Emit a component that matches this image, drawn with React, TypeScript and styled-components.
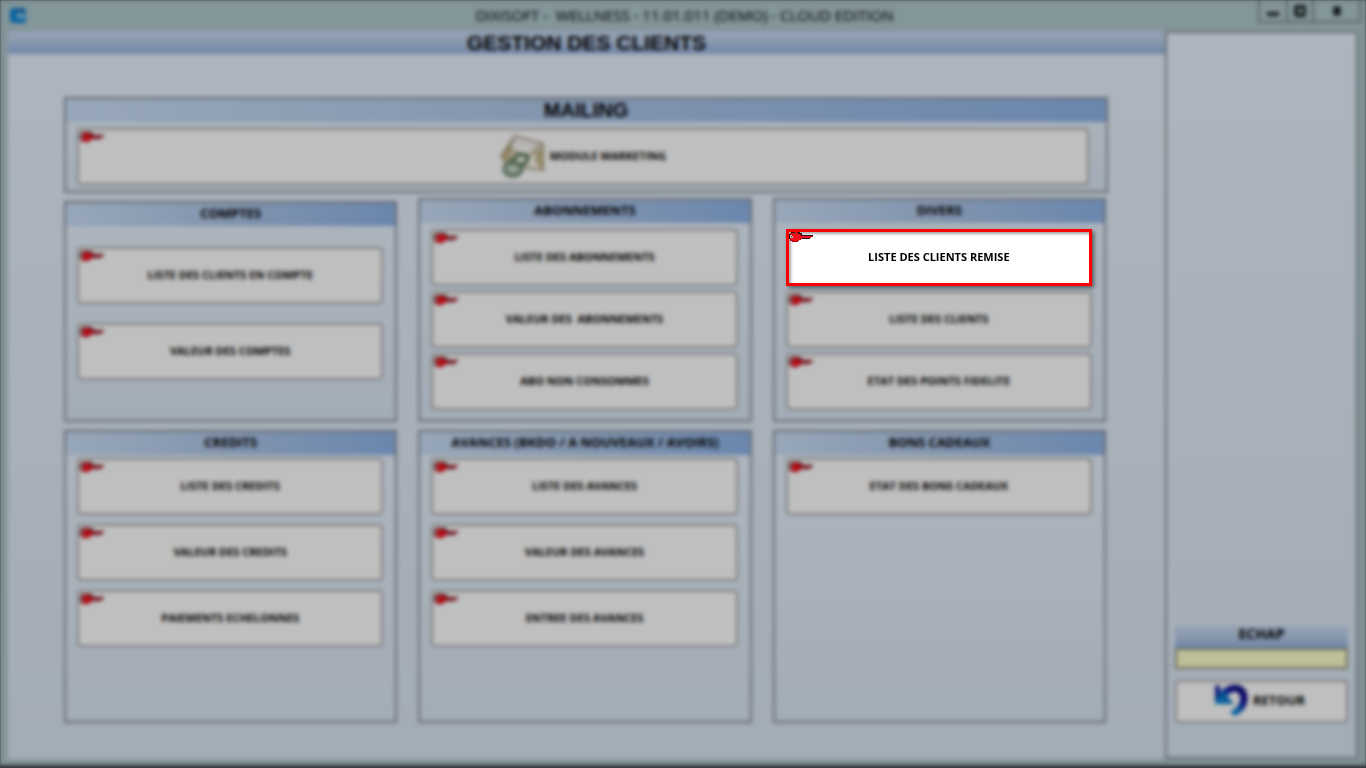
import React from "react";
import styled, { createGlobalStyle, css } from "styled-components";

const GlobalStyle = createGlobalStyle`
  * { box-sizing: border-box; }
  html, body { margin: 0; padding: 0; }
  body { font-family: "Open Sans", "Noto Sans", sans-serif; color: #000; }
  button, input { font: inherit; color: inherit; }
  h1, h2, p { margin: 0; }
`;

const edge = "#858d96";
const panelGradient = "linear-gradient(90deg, #cbe0f8 0%, #adc6e8 50%, #8fb4e8 100%)";
const barGradient = "linear-gradient(180deg, #c6d9f0 0%, #bccfea 40%, #94b2e0 100%)";

const Window = styled.div`
  position: relative;
  display: flex;
  flex-direction: column;
  min-height: 100vh;
  padding: 0 7px 6px;
  border: 1px solid #66757a;
  border-bottom: 3px solid #3c4648;
  background: #afc8cd;
`;

const TitleBar = styled.header`
  display: grid;
  grid-template-columns: 104px 1fr 104px;
  height: 30px;
  margin-right: -3px;
`;

const AppIcon = styled.svg`
  display: block;
  margin: 6px 0 0 1px;
`;

const WindowTitle = styled.p`
  padding-top: 4px;
  font-size: 15px;
  line-height: 20px;
  text-align: center;
  white-space: pre;
`;

const WindowButtons = styled.div`
  display: flex;
  justify-self: end;
  height: 22px;
  border: 2px solid #77898d;
  border-top: 0;
`;

const WindowButton = styled.button<{ $wide?: boolean }>`
  display: flex;
  align-items: center;
  justify-content: center;
  width: ${(p) => (p.$wide ? 47 : 26)}px;
  padding: 0;
  border: 0;
  background: transparent;

  & + & { border-left: 2px solid #77898d; }
`;

const Body = styled.div`
  display: flex;
  flex: 1;
`;

const Main = styled.main`
  display: flex;
  flex: 1;
  flex-direction: column;
  background: linear-gradient(180deg, #e8f1fd 0%, #dae7f4 100%);
`;

const PageTitle = styled.h1`
  height: 23px;
  background: ${barGradient};
  font: bold 21px/23px "Liberation Sans", Arial, sans-serif;
  text-align: center;
`;

const Content = styled.div`
  display: flex;
  flex: 1;
  flex-direction: column;
  gap: 5px;
  padding: 43px 57px 36px 56px;
`;

const Panels = styled.div`
  display: grid;
  flex: 1;
  grid-template-columns: repeat(3, 1fr);
  grid-template-rows: 224px 1fr;
  gap: 8px 21px;
  padding-right: 2px;
`;

const PanelBox = styled.section<{ $lowered?: boolean }>`
  display: flex;
  flex-direction: column;
  margin-top: ${(p) => (p.$lowered ? 3 : 0)}px;
  border: 2px solid ${edge};
  background: linear-gradient(180deg, #e8f1fd 0%, #dae7f4 100%);
`;

const PanelTitle = styled.h2<{ $large?: boolean }>`
  height: 23px;
  background: ${panelGradient};
  text-align: center;
  font-weight: bold;
  font-size: 13px;
  line-height: 21px;
  ${(p) =>
    p.$large &&
    css`
      font: bold 20px/23px "Liberation Sans", Arial, sans-serif;
    `}
`;

const Actions = styled.div<{ $top: number; $gap: number; $wide?: boolean }>`
  display: flex;
  flex-direction: column;
  gap: ${(p) => p.$gap}px;
  padding: ${(p) => p.$top}px ${(p) => (p.$wide ? 17 : 12)}px 6px 11px;
`;

const Button = styled.button<{ $active?: boolean }>`
  position: relative;
  display: flex;
  align-items: center;
  justify-content: center;
  gap: 4px;
  height: 57px;
  padding: 0 0 2px;
  border: 2px solid #a8a8a8;
  border-radius: 4px;
  background: #fff;
  font-size: 11px;
  font-weight: bold;
  white-space: pre;
  ${(p) =>
    p.$active &&
    css`
      z-index: 2;
      border: 3px solid #ff0000;
      border-radius: 0;
      box-shadow: 2px 2px 4px rgba(0, 0, 0, 0.5), inset 2px 2px 3px rgba(0, 0, 0, 0.35);
    `}
`;

const KeyIcon = styled.svg<{ $active?: boolean }>`
  position: absolute;
  top: ${(p) => (p.$active ? 0 : 2)}px;
  left: ${(p) => (p.$active ? 0 : 1)}px;
`;

const Sidebar = styled.aside`
  display: flex;
  flex-direction: column;
  justify-content: flex-end;
  width: 193px;
  padding: 0 8px 34px;
  border: 2px solid ${edge};
  background: linear-gradient(180deg, #e8f1fd 0%, #dae7f4 100%);
`;

const FieldLabel = styled.label`
  height: 22px;
  background: ${barGradient};
  font-size: 14px;
  font-weight: bold;
  line-height: 16px;
  text-align: center;
`;

const Field = styled.input`
  width: 100%;
  height: 21px;
  margin-bottom: 11px;
  border: 2px solid #8c8c78;
  background: #ffffcc;
`;

const BackButton = styled(Button)`
  height: 43px;
  gap: 5px;
  padding: 0 4px 4px 0;
  font-size: 13px;
`;

const Dimmer = styled.div`
  position: absolute;
  inset: -1px -1px -3px;
  z-index: 1;
  background: rgba(0, 0, 0, 0.25);
  backdrop-filter: blur(2px);
  pointer-events: none;
`;

const Key = ({ active }: { active?: boolean }) => (
  <KeyIcon $active={active} width="24" height="12" viewBox="0 0 24 12" aria-hidden="true" shapeRendering="crispEdges">
    <path d="M2 0h7v1h2v1h2v1h10v1h1v1h-2v1h-1V6h-1v1h-2V6h-1v1h-5v1h-2v1H9v1H3V9H1V7H0V2h1V1h1z" fill="#b00810" />
    <path d="M9 0h2v1h2v2h11v1H12V2H9zM12 6h9v1h-8zM0 2h1v5H0zM2 0h3v1H2z" fill="#281014" />
    <path d="M3 1h5v1h3v2h2v1h9v1H12v1h-1v1H9v1H4V8H2V6h2V3H2V2h1z" fill="#f80c18" />
    <path d="M1 3h2v1h1v2H1z" fill="#b8b8b8" />
    <path d="M2 4h1v1H2zM5 1h2v1H5z" fill="#505050" />
    <path d="M13 4h9v1h-9z" fill="#f01020" />
    <path d="M8 4h1v1H8zM14 5h1v1h-1zM18 5h1v1h-1z" fill="#d020a0" />
  </KeyIcon>
);

const Mail = () => (
  <svg width="46" height="48" viewBox="0 0 46 48" aria-hidden="true">
    <path d="M15 4 43 12v26L8 33 1 24z" fill="#e8dfbd" stroke="#a3967a" strokeWidth="2" />
    <path d="m15 4-6 14 17 5 17-11z" fill="#f4f1ed" stroke="#b5a9a0" strokeWidth="2" />
    <path d="m13 18 14-2 13 9v12l-20-5z" fill="#fffef5" />
    <path d="M1 24 11 13l-2 17M43 38l-8-10 8-12" fill="#c9bb8a" stroke="#a09270" />
    <path d="m14 19 11 5 15-4" fill="none" stroke="#a99b78" strokeWidth="2" />
    <ellipse cx="20" cy="28" rx="8" ry="5" fill="none" stroke="#5d7d5e" strokeWidth="4" transform="rotate(-20 20 28)" />
    <ellipse cx="13" cy="37" rx="9" ry="7" fill="#dfe9df" stroke="#5d8062" strokeWidth="3" />
    <path d="M17 34c-8-4-12 6-5 7 5 0 7-3 6-8" fill="none" stroke="#86a48b" strokeWidth="2" />
  </svg>
);

const BackArrow = () => (
  <svg width="34" height="32" viewBox="0 0 34 32" aria-hidden="true">
    <defs>
      <linearGradient id="back" x1="0" y1="1" x2="1" y2="0">
        <stop offset="0" stopColor="#08aee8" />
        <stop offset="0.45" stopColor="#0879cc" />
        <stop offset="0.65" stopColor="#10109a" />
        <stop offset="1" stopColor="#08086c" />
      </linearGradient>
    </defs>
    <path
      d="M1 2 6 1v7C14-1 28-2 32 7c5 11-2 22-12 25l-4-4c8-4 13-12 9-18-3-4-8-2-12 2l7 8H1z"
      fill="url(#back)"
    />
    <path d="M1 2 6 1v8l-4 9z" fill="#182098" />
  </svg>
);

type Action = { label: string; active?: boolean };
type PanelData = { title: string; top: number; gap: number; lowered?: boolean; actions: Action[] };

const panels: PanelData[] = [
  {
    title: "COMPTES",
    top: 21,
    gap: 19,
    lowered: true,
    actions: [{ label: "LISTE DES CLIENTS EN COMPTE" }, { label: "VALEUR DES COMPTES" }],
  },
  {
    title: "ABONNEMENTS",
    top: 6,
    gap: 5,
    actions: [{ label: "LISTE DES ABONNEMENTS" }, { label: "VALEUR DES  ABONNEMENTS" }, { label: "ABO NON CONSOMMES" }],
  },
  {
    title: "DIVERS",
    top: 6,
    gap: 5,
    actions: [
      { label: "LISTE DES CLIENTS REMISE", active: true },
      { label: "LISTE DES CLIENTS" },
      { label: "ETAT DES POINTS FIDELITE" },
    ],
  },
  {
    title: "CREDITS",
    top: 3,
    gap: 9,
    actions: [{ label: "LISTE DES CREDITS" }, { label: "VALEUR DES CREDITS" }, { label: "PAIEMENTS ECHELONNES" }],
  },
  {
    title: "AVANCES (BKDO / A NOUVEAUX / AVOIRS)",
    top: 3,
    gap: 9,
    actions: [{ label: "LISTE DES AVANCES" }, { label: "VALEUR DES AVANCES" }, { label: "ENTREE DES AVANCES" }],
  },
  { title: "BONS CADEAUX", top: 3, gap: 9, actions: [{ label: "ETAT DES BONS CADEAUX" }] },
];

const Panel = ({ title, top, gap, lowered, actions }: PanelData) => (
  <PanelBox $lowered={lowered}>
    <PanelTitle>{title}</PanelTitle>
    <Actions $top={top} $gap={gap}>
      {actions.map(({ label, active }) => (
        <Button key={label} type="button" $active={active}>
          <Key active={active} />
          {label}
        </Button>
      ))}
    </Actions>
  </PanelBox>
);

export default function App() {
  return (
    <>
      <GlobalStyle />
      <Window>
        <TitleBar>
          <AppIcon width="18" height="17" viewBox="0 0 18 17" aria-hidden="true">
            <rect x="1" y="1" width="16" height="15" rx="3" fill="#0d86d8" />
            <path d="M17 6H8v5h9V9h-4V7h4z" fill="#9fd2ee" />
            <path d="M7 2h9v3H7z" fill="#1e62a4" />
          </AppIcon>
          <WindowTitle>{"DIXISOFT -  WELLNESS - 11.01.011 (DEMO) - CLOUD EDITION"}</WindowTitle>
          <WindowButtons>
            <WindowButton type="button" aria-label="Réduire">
              <svg width="12" height="12" viewBox="0 0 12 12"><path d="M0 7h12v4H0z" fill="#202829" /></svg>
            </WindowButton>
            <WindowButton type="button" aria-label="Agrandir">
              <svg width="12" height="12" viewBox="0 0 12 12">
                <rect x="2" y="2" width="9" height="8" rx="1" fill="none" stroke="#202829" strokeWidth="4" />
              </svg>
            </WindowButton>
            <WindowButton type="button" aria-label="Fermer" $wide>
              <svg width="10" height="10" viewBox="0 0 10 10">
                <path d="m2 1 6 8M8 1 2 9" stroke="#101819" strokeWidth="4" />
              </svg>
            </WindowButton>
          </WindowButtons>
        </TitleBar>
        <Body>
          <Main>
            <PageTitle>GESTION DES CLIENTS</PageTitle>
            <Content>
              <PanelBox>
                <PanelTitle $large>MAILING</PanelTitle>
                <Actions $top={6} $gap={0} $wide>
                  <Button type="button">
                    <Key />
                    <Mail />
                    MODULE MARKETING
                  </Button>
                </Actions>
              </PanelBox>
              <Panels>
                {panels.map((panel) => (
                  <Panel key={panel.title} {...panel} />
                ))}
              </Panels>
            </Content>
          </Main>
          <Sidebar>
            <FieldLabel htmlFor="echap">ECHAP</FieldLabel>
            <Field id="echap" type="text" />
            <BackButton type="button">
              <BackArrow />
              RETOUR
            </BackButton>
          </Sidebar>
        </Body>
        <Dimmer />
      </Window>
    </>
  );
}
